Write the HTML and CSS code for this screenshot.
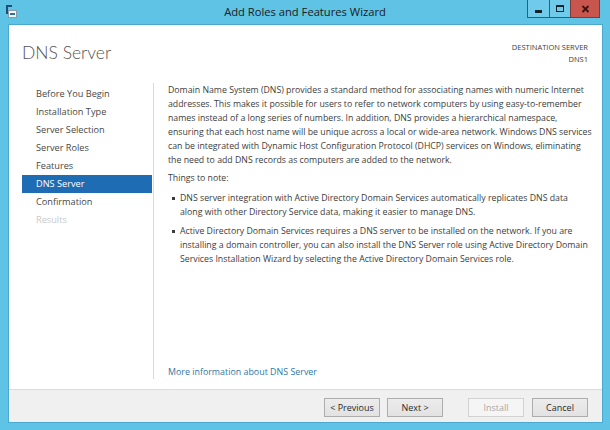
FILE: index.html
```html
<!DOCTYPE html>
<html>
<head>
<meta charset="utf-8">
<title>Add Roles and Features Wizard</title>
<link rel="stylesheet" href="styles.css">
</head>
<body>
<div class="window">
  <div class="titlebar">
    <div class="tb-left">
      <svg class="appicon" width="13" height="15" viewBox="0 0 13 15">
        <rect x="1" y="1" width="2" height="9" fill="#1d4f7a"/>
        <rect x="1" y="1" width="6" height="2" fill="#1d4f7a"/>
        <rect x="3.5" y="6.5" width="8" height="7" fill="#f4f4f4" stroke="#8a9aa6" stroke-width="1"/>
        <rect x="5" y="9" width="5" height="2" fill="#2c6fb0"/>
      </svg>
    </div>
    <div class="title">Add Roles and Features Wizard</div>
    <div class="tb-right">
      <div class="wb wb-min"><span class="g-min"></span></div>
      <div class="wb wb-max"><span class="g-max"></span></div>
      <div class="wb wb-close">
        <svg width="9" height="8" viewBox="0 0 9 8"><path d="M1.5 1 L7.5 7 M7.5 1 L1.5 7" stroke="#3a1410" stroke-width="1.8"/></svg>
      </div>
    </div>
  </div>
  <div class="client">
    <div class="header">
      <h1 class="page-title">DNS Server</h1>
      <div class="dest">
        <div>DESTINATION SERVER</div>
        <div>DNS1</div>
      </div>
    </div>
    <div class="main">
      <ul class="nav">
        <li>Before You Begin</li>
        <li>Installation Type</li>
        <li>Server Selection</li>
        <li>Server Roles</li>
        <li>Features</li>
        <li class="active">DNS Server</li>
        <li>Confirmation</li>
        <li class="disabled">Results</li>
      </ul>
      <div class="content">
        <div class="body">
          <p class="para">Domain Name System (DNS) provides a standard method for associating names with numeric Internet<br>addresses. This makes it possible for users to refer to network computers by using easy-to-remember<br>names instead of a long series of numbers. In addition, DNS provides a hierarchical namespace,<br>ensuring that each host name will be unique across a local or wide-area network. Windows DNS services<br>can be integrated with Dynamic Host Configuration Protocol (DHCP) services on Windows, eliminating<br>the need to add DNS records as computers are added to the network.</p>
          <p class="note">Things to note:</p>
          <ul class="bullets">
            <li>DNS server integration with Active Directory Domain Services automatically replicates DNS data<br>along with other Directory Service data, making it easier to manage DNS.</li>
            <li>Active Directory Domain Services requires a DNS server to be installed on the network. If you are<br>installing a domain controller, you can also install the DNS Server role using Active Directory Domain<br>Services Installation Wizard by selecting the Active Directory Domain Services role.</li>
          </ul>
        </div>
        <a class="more" href="#">More information about DNS Server</a>
      </div>
    </div>
    <div class="footer">
      <button class="btn">&lt; Previous</button>
      <button class="btn btn-next">Next &gt;</button>
      <button class="btn btn-install" disabled>Install</button>
      <button class="btn btn-cancel">Cancel</button>
    </div>
  </div>
</div>
</body>
</html>
```
FILE: styles.css
```css
* { box-sizing: border-box; }
html, body { margin: 0; padding: 0; }
body {
  width: 610px;
  height: 430px;
  overflow: hidden;
  font-family: "Open Sans", "Noto Sans", "Liberation Sans", sans-serif;
  color: #3a3a3a;
}
.window {
  width: 610px;
  height: 430px;
  background: #5ec3e5;
  display: flex;
  flex-direction: column;
}
.titlebar {
  height: 24px;
  display: grid;
  grid-template-columns: 1fr auto 1fr;
  align-items: start;
}
.tb-left { padding: 4px 0 0 5px; }
.appicon { display: block; }
.title {
  font-size: 11.2px;
  line-height: 24px;
  color: #1b1b1b;
}
.tb-right {
  display: flex;
  justify-content: flex-end;
  padding-right: 10px;
}
.wb {
  height: 18px;
  border: 1px solid #2f5f75;
  border-top: none;
  display: flex;
  align-items: center;
  justify-content: center;
}
.wb-min { width: 22px; background: #6fcbe9; border-right: none; }
.wb-max { width: 21px; background: #6fcbe9; border-right: none; }
.wb-close { width: 30px; background: #c9564e; border-color: #7a3a35; }
.g-min {
  width: 7px;
  height: 3px;
  background: #14232b;
  margin-top: 5px;
}
.g-max {
  width: 8px;
  height: 7px;
  border: 1.5px solid #14232b;
  border-top-width: 2.5px;
}
.client {
  flex: 1;
  margin: 0 7px 7px 8px;
  background: #ffffff;
  border: 1px solid #4aa9cf;
  display: flex;
  flex-direction: column;
}
.header {
  height: 55px;
  display: flex;
  justify-content: space-between;
  align-items: flex-start;
  padding: 16px 14px 0 13px;
}
.page-title {
  margin: 0;
  font-family: "Lato", "Open Sans", sans-serif;
  font-size: 17.5px;
  line-height: 24px;
  font-weight: 300;
  color: #555555;
}
.dest {
  font-size: 7.5px;
  line-height: 12px;
  text-align: right;
  color: #3d3d3d;
  padding-top: 0;
}
.main {
  flex: 1;
  display: flex;
}
.nav {
  width: 144px;
  list-style: none;
  margin: 0;
  padding: 5px 0 0 0;
}
.nav li {
  width: 130px;
  height: 18px;
  line-height: 18px;
  margin-left: 13px;
  padding-left: 14px;
  font-size: 9.2px;
  color: #474747;
}
.nav li.active {
  background: #1e6cb3;
  color: #ffffff;
}
.nav li.disabled { color: #c9c9c9; }
.content {
  flex: 1;
  display: flex;
  flex-direction: column;
  margin: 3px 0 10px 0;
  border-left: 1px solid #dadada;
  padding: 0 6px 0 14px;
}
.body {
  flex: 1;
  font-size: 8.75px;
  line-height: 14px;
  color: #3c3c3c;
  white-space: nowrap;
}
.para { margin: 0; }
.note { margin: 4px 0 0 0; }
.bullets {
  list-style: none;
  margin: 6px 0 0 0;
  padding: 0;
}
.bullets li {
  position: relative;
  padding-left: 12px;
  margin-bottom: 5px;
}
.bullets li::before {
  content: "";
  position: absolute;
  left: 4px;
  top: 6px;
  width: 2.5px;
  height: 2.5px;
  background: #3a3a3a;
}
.more {
  font-size: 8.9px;
  line-height: 14px;
  color: #2f77a6;
  text-decoration: none;
}
.footer {
  height: 33px;
  border-top: 1px solid #dcdcdc;
  background: #f0f0f0;
  display: flex;
  justify-content: flex-end;
  align-items: flex-start;
  padding: 8px 14px 0 0;
}
.btn {
  width: 56px;
  height: 19px;
  margin: 0;
  padding: 0;
  border: 1px solid #adadad;
  background: linear-gradient(#ececec, #e2e2e2);
  font-family: "Open Sans", "Noto Sans", "Liberation Sans", sans-serif;
  font-size: 9px;
  color: #2a2a2a;
}
.btn-next { margin-left: 7px; }
.btn-install {
  margin-left: 25px;
  background: #f5f5f5;
  border-color: #d2d2d2;
  color: #a8a8a8;
}
.btn-cancel { margin-left: 8px; }
```
